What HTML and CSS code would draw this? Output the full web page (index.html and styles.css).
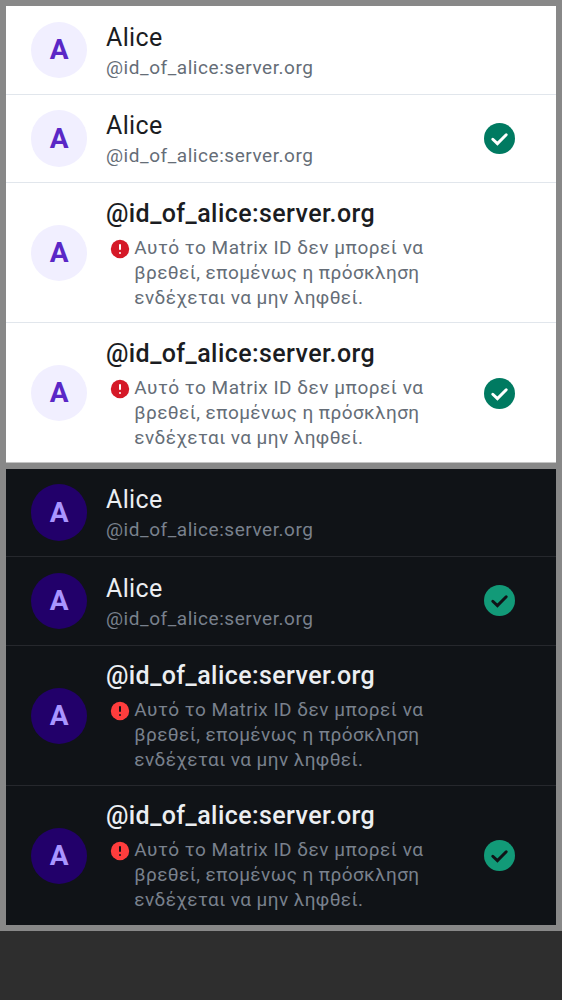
FILE: index.html
```html
<!DOCTYPE html>
<html lang="el"><head><meta charset="utf-8"><title>Alice</title><link rel="stylesheet" href="styles.css"></head>
<body><main class="previews"></main><script src="main.js"></script></body></html>
```
FILE: styles.css
```css
body{margin:0;background:#2e2e2e;font-family:Roboto,sans-serif}
.previews{display:flex;flex-direction:column;gap:6px;padding:6px;background:#888}
.theme{--bg:#fff;--text:#1b1d22;--sub:#656d77;--line:#e1e6ec;--avatar:#f1efff;--letter:#5a27c6;--error:#d51928;--check:#007a61;background:var(--bg);color:var(--text)}
.dark{--bg:#101317;--text:#ebeef2;--sub:#79818d;--line:#26282d;--avatar:#22006a;--letter:#a995ff;--error:#ff3d3d;--check:#129a78}
.row{display:flex;align-items:center;box-sizing:border-box;height:88px;padding:0 41px 0 25px;border-bottom:1px solid var(--line)}
.row:first-child{height:89px}
.dark .row:first-child{height:88px}
.dark .row:nth-child(2){height:89px}
.row.tall{height:140px;padding-top:1px}
.theme .row:last-child{border-bottom-color:#c4c4c4}
.dark .row:last-child{border-bottom:0;height:139px}
.avatar{display:grid;place-items:center;width:56.4px;height:56.4px;border-radius:50%;background:var(--avatar);color:var(--letter);font-size:28px;font-weight:700}
.info{flex:1;margin-left:18.6px}
.dark .tall .info{margin-bottom:2px}
.name{font-size:25px;line-height:34px;letter-spacing:.35px;white-space:nowrap}
.tall .name{font-weight:500;letter-spacing:.42px}
.id,.warning{font-size:19px;line-height:25px;letter-spacing:.55px;color:var(--sub)}
.warning{display:flex;gap:4.3px;margin-top:4px;padding-left:4px;letter-spacing:.51px;white-space:nowrap}
.message-rest{letter-spacing:.41px}
.alert{width:20px;height:20px;margin-top:4px}
.check{width:31px;height:31px}
.dark .check{margin-bottom:1px}
.disc{fill:var(--error)}
.mark{fill:var(--bg)}
.ok{fill:var(--check)}
.tick{fill:none;stroke:var(--bg);stroke-width:2.3;stroke-linecap:round;stroke-linejoin:miter}
```
FILE: main.js
```js
const check = `<svg class="check" viewBox="0 0 24 24"><circle class="ok" cx="12" cy="12" r="12"/><path class="tick" d="M6.8 12.6l3.6 3.4 6.8-6.9"/></svg>`;
const warning = `<div class="warning"><svg class="alert" viewBox="0 0 20 20"><circle class="disc" cx="10" cy="10" r="9.2"/><rect class="mark" x="9" y="5" width="2" height="6" rx="1"/><circle class="mark" cx="10" cy="14" r="1"/></svg><div>Αυτό το Matrix ID δεν μπορεί να<br><span class="message-rest">βρεθεί, επομένως η πρόσκληση<br>ενδέχεται να μην ληφθεί.</span></div></div>`;
const row = (unresolved, selected) => `<div class="row ${unresolved ? 'tall' : ''}"><div class="avatar">A</div><div class="info"><div class="name">${unresolved ? '@id_of_alice:server.org' : 'Alice'}</div>${unresolved ? warning : '<div class="id">@id_of_alice:server.org</div>'}</div>${selected ? check : ''}</div>`;
const rows = row(false, false) + row(false, true) + row(true, false) + row(true, true);
document.querySelector('.previews').innerHTML = `<section class="theme">${rows}</section><section class="theme dark">${rows}</section>`;
```
